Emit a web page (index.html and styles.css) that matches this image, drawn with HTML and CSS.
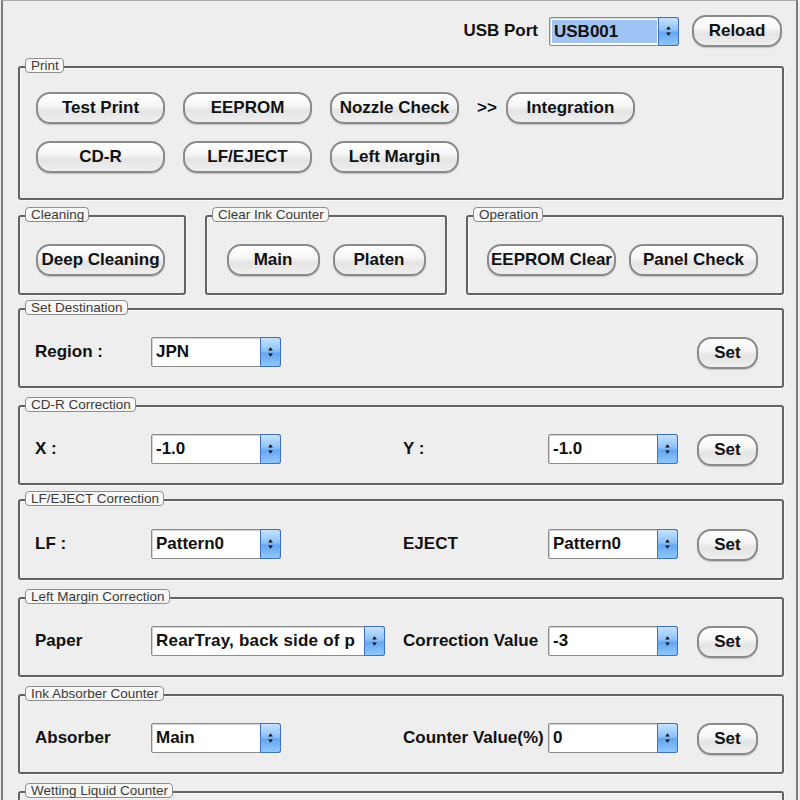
FILE: index.html
```html
<!DOCTYPE html>
<html>
<head>
<meta charset="utf-8">
<title>Service Tool</title>
<link rel="stylesheet" href="styles.css">
</head>
<body>
<div class="window">
  <div class="topbar">
    <span class="lbl">USB Port</span>
    <div class="select sel-usb">
      <span class="val hl">USB001</span>
      <span class="spin"><svg width="20" height="28" viewBox="0 0 20 28"><path d="M7.5 12.5 L10 9 L12.5 12.5 Z M7.5 15.5 L10 19 L12.5 15.5 Z" fill="#111"/></svg></span>
    </div>
    <button class="btn btn-reload">Reload</button>
  </div>

  <div class="group g-print">
    <span class="legend">Print</span>
    <div class="btn-row">
      <button class="btn">Test Print</button>
      <button class="btn">EEPROM</button>
      <button class="btn">Nozzle Check</button>
      <span class="arrows">&gt;&gt;</span>
      <button class="btn">Integration</button>
    </div>
    <div class="btn-row">
      <button class="btn">CD-R</button>
      <button class="btn">LF/EJECT</button>
      <button class="btn">Left Margin</button>
    </div>
  </div>

  <div class="row3">
    <div class="group g-small g-clean">
      <span class="legend">Cleaning</span>
      <button class="btn">Deep Cleaning</button>
    </div>
    <div class="group g-small g-ink">
      <span class="legend">Clear Ink Counter</span>
      <button class="btn btn-mid">Main</button>
      <button class="btn btn-mid">Platen</button>
    </div>
    <div class="group g-small g-op">
      <span class="legend">Operation</span>
      <button class="btn">EEPROM Clear</button>
      <button class="btn">Panel Check</button>
    </div>
  </div>

  <div class="group g-form g-dest">
    <span class="legend">Set Destination</span>
    <div class="form-grid">
      <span class="lbl">Region :</span>
      <div class="select"><span class="val">JPN</span><span class="spin"><svg width="20" height="28" viewBox="0 0 20 28"><path d="M7.5 12.5 L10 9 L12.5 12.5 Z M7.5 15.5 L10 19 L12.5 15.5 Z" fill="#111"/></svg></span></div>
      <button class="btn btn-set col-set">Set</button>
    </div>
  </div>

  <div class="group g-form">
    <span class="legend">CD-R Correction</span>
    <div class="form-grid">
      <span class="lbl">X :</span>
      <div class="select"><span class="val">-1.0</span><span class="spin"><svg width="20" height="28" viewBox="0 0 20 28"><path d="M7.5 12.5 L10 9 L12.5 12.5 Z M7.5 15.5 L10 19 L12.5 15.5 Z" fill="#111"/></svg></span></div>
      <span class="lbl">Y :</span>
      <div class="select"><span class="val">-1.0</span><span class="spin"><svg width="20" height="28" viewBox="0 0 20 28"><path d="M7.5 12.5 L10 9 L12.5 12.5 Z M7.5 15.5 L10 19 L12.5 15.5 Z" fill="#111"/></svg></span></div>
      <button class="btn btn-set">Set</button>
    </div>
  </div>

  <div class="group g-form g-lf">
    <span class="legend">LF/EJECT Correction</span>
    <div class="form-grid">
      <span class="lbl">LF :</span>
      <div class="select"><span class="val">Pattern0</span><span class="spin"><svg width="20" height="28" viewBox="0 0 20 28"><path d="M7.5 12.5 L10 9 L12.5 12.5 Z M7.5 15.5 L10 19 L12.5 15.5 Z" fill="#111"/></svg></span></div>
      <span class="lbl">EJECT</span>
      <div class="select"><span class="val">Pattern0</span><span class="spin"><svg width="20" height="28" viewBox="0 0 20 28"><path d="M7.5 12.5 L10 9 L12.5 12.5 Z M7.5 15.5 L10 19 L12.5 15.5 Z" fill="#111"/></svg></span></div>
      <button class="btn btn-set">Set</button>
    </div>
  </div>

  <div class="group g-form">
    <span class="legend">Left Margin Correction</span>
    <div class="form-grid">
      <span class="lbl">Paper</span>
      <div class="select sel-wide"><span class="val val-wide">RearTray, back side of p</span><span class="spin"><svg width="20" height="28" viewBox="0 0 20 28"><path d="M7.5 12.5 L10 9 L12.5 12.5 Z M7.5 15.5 L10 19 L12.5 15.5 Z" fill="#111"/></svg></span></div>
      <span class="lbl">Correction Value</span>
      <div class="select"><span class="val">-3</span><span class="spin"><svg width="20" height="28" viewBox="0 0 20 28"><path d="M7.5 12.5 L10 9 L12.5 12.5 Z M7.5 15.5 L10 19 L12.5 15.5 Z" fill="#111"/></svg></span></div>
      <button class="btn btn-set">Set</button>
    </div>
  </div>

  <div class="group g-form">
    <span class="legend">Ink Absorber Counter</span>
    <div class="form-grid">
      <span class="lbl">Absorber</span>
      <div class="select"><span class="val">Main</span><span class="spin"><svg width="20" height="28" viewBox="0 0 20 28"><path d="M7.5 12.5 L10 9 L12.5 12.5 Z M7.5 15.5 L10 19 L12.5 15.5 Z" fill="#111"/></svg></span></div>
      <span class="lbl">Counter Value(%)</span>
      <div class="select"><span class="val">0</span><span class="spin"><svg width="20" height="28" viewBox="0 0 20 28"><path d="M7.5 12.5 L10 9 L12.5 12.5 Z M7.5 15.5 L10 19 L12.5 15.5 Z" fill="#111"/></svg></span></div>
      <button class="btn btn-set">Set</button>
    </div>
  </div>

  <div class="group g-form g-wet">
    <span class="legend">Wetting Liquid Counter</span>
  </div>
</div>
</body>
</html>
```
FILE: styles.css
```css
html, body {
  margin: 0;
  padding: 0;
  background: #eeeeee;
  overflow: hidden;
  height: 800px;
}

.window {
  box-sizing: border-box;
  width: 797px;
  height: 800px;
  margin-left: 1px;
  border-left: 2px solid #7c7c7c;
  border-right: 2px solid #7c7c7c;
  border-top: 1px solid #a8a8a8;
  background: #eeeeee;
  font-family: "Liberation Sans", Arial, sans-serif;
  color: #111;
  overflow: hidden;
}

.topbar {
  display: flex;
  justify-content: flex-end;
  align-items: center;
  padding: 14px 14px 0 0;
  height: 32px;
}

.lbl {
  font-weight: bold;
  font-size: 17px;
  color: #111;
  white-space: nowrap;
}

.topbar .lbl {
  margin-right: 11px;
}

.btn {
  box-sizing: border-box;
  width: 129px;
  height: 32px;
  padding: 0;
  border: 2px solid #8a8a8a;
  border-radius: 14px;
  background: linear-gradient(#ffffff 0%, #f6f6f6 40%, #e4e4e4 60%, #efefef 100%);
  box-shadow: 0 1px 1px rgba(0, 0, 0, 0.18), inset 0 1px 0 #ffffff;
  font-family: "Liberation Sans", Arial, sans-serif;
  font-weight: bold;
  font-size: 17px;
  color: #111;
  white-space: nowrap;
  overflow: hidden;
  flex: none;
}

.btn-reload {
  width: 90px;
  margin-left: 13px;
}

.btn-mid {
  width: 93px;
}

.btn-set {
  width: 61px;
}

/* select boxes */
.select {
  box-sizing: border-box;
  display: flex;
  width: 130px;
  height: 30px;
  border: 1px solid #8c8c8c;
  border-radius: 2px;
  background: #ffffff;
  box-shadow: inset 1px 1px 0 #d4d4d4;
}

.sel-usb {
  height: 29px;
}

.sel-wide {
  width: 234px;
}

.val {
  flex: 1;
  min-width: 0;
  overflow: hidden;
  white-space: nowrap;
  font-weight: bold;
  font-size: 17px;
  line-height: 28px;
  padding-left: 4px;
  color: #111;
}

.val-wide {
  letter-spacing: 0.2px;
}

.val.hl {
  background: #9fc3f3;
  margin: 2px 1px 2px 2px;
  line-height: 24px;
  padding-left: 2px;
}

.spin {
  box-sizing: border-box;
  width: 21px;
  flex: none;
  margin: -1px -1px -1px 0;
  height: 30px;
  border: 1px solid #3f70c8;
  border-radius: 0 3px 3px 0;
  background: linear-gradient(#c6e2ff 0%, #8cc2f8 45%, #64a6f0 55%, #8fc8fb 100%);
  display: flex;
  align-items: center;
  justify-content: center;
  overflow: hidden;
}

.sel-usb .spin {
  height: 29px;
}

/* groups */
.group {
  box-sizing: border-box;
  position: relative;
  margin: 0 12px 0 15px;
  border: 2px solid #636363;
  border-radius: 3px;
  box-shadow: inset 1px 1px 0 #fafafa, 1px 1px 0 #fafafa;
}

.legend {
  position: absolute;
  left: 5px;
  top: -10px;
  height: 15px;
  box-sizing: border-box;
  padding: 0 4px 0 5px;
  border: 1px solid #8e8e8e;
  border-radius: 4px;
  background: #f8f8f8;
  font-size: 13.5px;
  line-height: 13px;
  color: #3a3a3a;
  white-space: nowrap;
}

.g-print {
  margin-top: 19px;
  height: 134px;
  padding: 24px 0 0 16px;
}

.btn-row {
  display: flex;
  align-items: center;
  gap: 18px;
}

.btn-row + .btn-row {
  margin-top: 17px;
}

.arrows {
  font-weight: bold;
  font-size: 17px;
  margin-right: -9px;
}

.row3 {
  display: flex;
  gap: 19px;
  margin: 15px 12px 0 15px;
}

.row3 .group {
  margin: 0;
}

.g-small {
  height: 80px;
  padding-top: 10px;
  display: flex;
  align-items: center;
  justify-content: center;
  gap: 13px;
}

.g-clean {
  width: 168px;
  justify-content: flex-start;
  padding-left: 16px;
}

.g-ink {
  width: 242px;
}

.g-op {
  flex: 1;
  justify-content: flex-start;
  padding-left: 19px;
}

.g-form {
  height: 80px;
  margin-top: 17px;
  padding: 8px 0 0 15px;
  display: flex;
  align-items: center;
}

.g-dest {
  margin-top: 13px;
}

.g-lf {
  margin-top: 14px;
  height: 81px;
}

.g-wet {
  margin-top: 17px;
}

.form-grid {
  display: grid;
  grid-template-columns: 116px 252px 145px 130px 80px;
  align-items: center;
}

.form-grid .btn-set {
  justify-self: end;
  margin-top: 2px;
}

.col-set {
  grid-column: 5;
}
```
